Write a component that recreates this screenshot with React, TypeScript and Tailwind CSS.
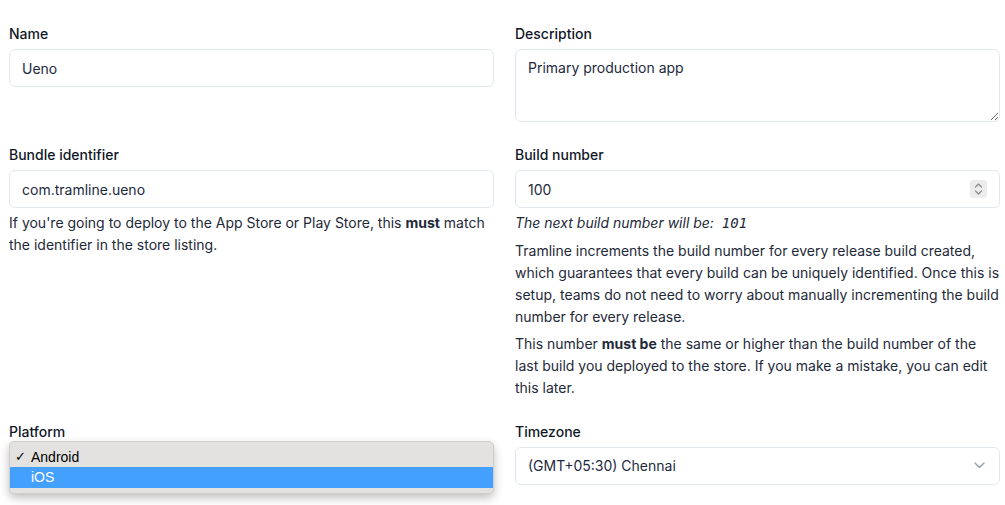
import React from 'react';

const font = { fontFamily: 'Inter, "Noto Sans", sans-serif' };

function Label({ children }: { children: React.ReactNode }) {
  return (
    <label className="mb-[5px] block text-sm font-medium leading-5 text-gray-900">
      {children}
    </label>
  );
}

const inputCls =
  'block h-[38px] w-full rounded-md border border-[#e2e8f0] bg-white px-[12px] text-sm leading-5 text-slate-800 outline-none';

function Spinner() {
  return (
    <span className="pointer-events-none absolute right-[13px] top-[10px] flex h-[18px] w-[17px] flex-col items-center justify-center rounded-[3px] bg-[#ececec]">
      <svg width="9" height="14" viewBox="0 0 9 14" fill="none" stroke="#8a8a8a" strokeWidth="1.2" strokeLinecap="round" strokeLinejoin="round">
        <path d="M1.5 5 L4.5 2 L7.5 5" />
        <path d="M1.5 9 L4.5 12 L7.5 9" />
      </svg>
    </span>
  );
}

function Chevron() {
  return (
    <svg
      className="pointer-events-none absolute right-[15px] top-[15px]"
      width="11"
      height="7"
      viewBox="0 0 11 7"
      fill="none"
      stroke="#9ca3af"
      strokeWidth="1.5"
      strokeLinecap="round"
      strokeLinejoin="round"
    >
      <path d="M1 1 L5.5 5.5 L10 1" />
    </svg>
  );
}

export default function App() {
  return (
    <div className="min-h-[505px] bg-white pl-[9px] pr-[5px] pt-[24px]" style={font}>
      <div className="grid grid-cols-2 items-start gap-x-[21px] gap-y-[23px]">
        {/* Name */}
        <div>
          <Label>Name</Label>
          <input className={inputCls} defaultValue="Ueno" />
        </div>

        {/* Description */}
        <div>
          <Label>Description</Label>
          <textarea
            className="block h-[73px] w-full resize-y rounded-md border border-[#e2e8f0] bg-white px-[12px] py-[8px] text-sm leading-5 text-slate-800 outline-none"
            defaultValue="Primary production app"
          />
        </div>

        {/* Bundle identifier */}
        <div>
          <Label>Bundle identifier</Label>
          <input className={inputCls} defaultValue="com.tramline.ueno" />
          <p className="mt-[4px] text-sm leading-[22px] text-gray-800">
            If you're going to deploy to the App Store or Play Store, this{' '}
            <strong className="font-bold">must</strong> match the identifier in the store listing.
          </p>
        </div>

        {/* Build number */}
        <div>
          <Label>Build number</Label>
          <div className="relative">
            <input className={inputCls} defaultValue="100" />
            <Spinner />
          </div>
          <p className="mt-[4px] text-sm italic leading-[22px] text-gray-800">
            The next build number will be:&nbsp;{' '}
            <code
              className="text-sm italic"
              style={{ fontFamily: '"DejaVu Sans Mono", "Liberation Mono", monospace' }}
            >
              101
            </code>
          </p>
          <p className="mt-[6px] text-sm leading-[22px] text-gray-800">
            Tramline increments the build number for every release build created, which guarantees
            that every build can be uniquely identified. Once this is setup, teams do not need to
            worry about manually incrementing the build number for every release.
          </p>
          <p className="mt-[5px] text-sm leading-[22px] text-gray-800">
            This number <strong className="font-bold">must be</strong> the same or higher than the
            build number of the last build you deployed to the store. If you make a mistake, you can
            edit this later.
          </p>
        </div>

        {/* Platform */}
        <div>
          <Label>Platform</Label>
          <div className="relative">
            <div className="h-[38px] w-full rounded-md border border-[#3b82f6] bg-white" />
            <div
              className="absolute -top-[6px] left-0 right-0 rounded-[5px] border border-[#d0cecc] bg-[#e4e2e0] py-[5px] shadow-[0_4px_10px_rgba(0,0,0,0.25)]"
              style={{ fontFamily: '"Liberation Sans", Arial, sans-serif' }}
            >
              <div className="flex h-[20px] items-center text-[14px] text-black">
                <span className="w-[21px] pl-[5px] text-[13px]">✓</span>
                <span>Android</span>
              </div>
              <div className="flex h-[21px] items-center bg-[#44a0ff] text-[14px] text-white">
                <span className="w-[21px]" />
                <span>iOS</span>
              </div>
            </div>
          </div>
        </div>

        {/* Timezone */}
        <div>
          <Label>Timezone</Label>
          <div className="relative">
            <select className={inputCls + ' appearance-none'} defaultValue="chennai">
              <option value="chennai">(GMT+05:30) Chennai</option>
            </select>
            <Chevron />
          </div>
        </div>
      </div>
    </div>
  );
}
